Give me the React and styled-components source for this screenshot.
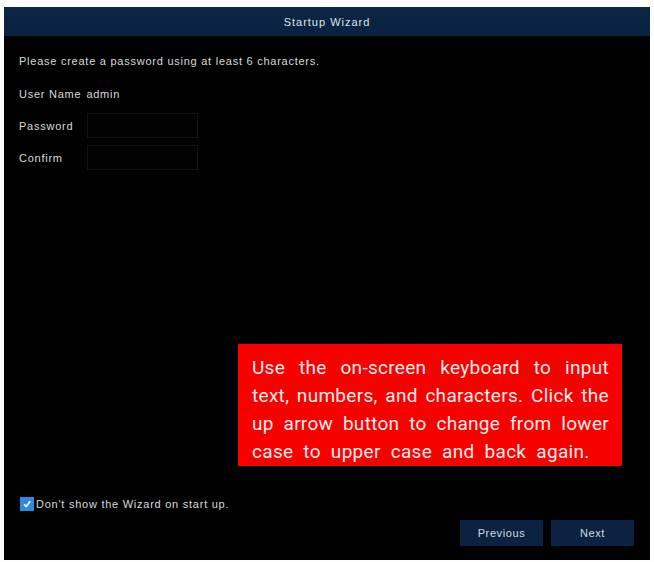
import React, { useState } from "react";
import styled, { createGlobalStyle } from "styled-components";

const GlobalStyle = createGlobalStyle`
  html, body {
    margin: 0;
    padding: 0;
    background: #ffffff;
  }
  body {
    font-family: "Liberation Sans", Arial, sans-serif;
  }
`;

const Page = styled.div`
  width: 654px;
  height: 562px;
  box-sizing: border-box;
  padding: 7px 4px 2px 4px;
  background: #fdfdfd;
`;

const Screen = styled.div`
  position: relative;
  height: 100%;
  background: #010101;
  display: flex;
  flex-direction: column;
  color: #d9d9d9;
  font-size: 11px;
  letter-spacing: 0.75px;
`;

const Header = styled.div`
  height: 29px;
  flex: 0 0 auto;
  background: linear-gradient(#0c2645, #0a2140);
  display: flex;
  align-items: center;
  justify-content: center;
  color: #dfe3ea;
  font-size: 11px;
  letter-spacing: 1px;
`;

const Body = styled.div`
  flex: 1;
  display: flex;
  flex-direction: column;
  padding: 0 16px 14px 15px;
`;

const Intro = styled.div`
  margin-top: 17px;
  line-height: 16px;
`;

const Row = styled.div`
  display: flex;
  align-items: center;
  margin-top: ${(p) => p.$gap}px;
  height: ${(p) => p.$h}px;
`;

const Label = styled.span`
  width: ${(p) => (p.$auto ? "auto" : "68px")};
  margin-right: ${(p) => (p.$auto ? "5px" : "0")};
`;

const Field = styled.div`
  width: 111px;
  height: 25px;
  box-sizing: border-box;
  border: 1px solid #141414;
  background: #020202;
`;

const Footer = styled.div`
  margin-top: auto;
  display: flex;
  flex-direction: column;
`;

const CheckRow = styled.label`
  display: flex;
  align-items: center;
  height: 14px;
  padding-left: 1px;
  cursor: pointer;
`;

const Box = styled.span`
  width: 14px;
  height: 14px;
  background: #2c8be0;
  display: flex;
  align-items: center;
  justify-content: center;
  margin-right: 2px;
`;

const Buttons = styled.div`
  display: flex;
  justify-content: flex-end;
  gap: 8px;
  margin-top: 9px;
`;

const Button = styled.button`
  width: 83px;
  height: 26px;
  border: none;
  background: #0b2240;
  color: #d4d9e0;
  font-family: "Liberation Sans", Arial, sans-serif;
  font-size: 11px;
  letter-spacing: 0.6px;
  cursor: pointer;
`;

const Callout = styled.div`
  position: absolute;
  left: 234px;
  top: 337px;
  width: 384px;
  height: 122px;
  box-sizing: border-box;
  background: #f70000;
  color: #ffecec;
  padding: 10px 13px 0 14px;
  font-family: Roboto, "Liberation Sans", sans-serif;
  font-size: 19px;
  line-height: 28px;
  letter-spacing: 0.3px;
`;

const CalloutLine = styled.span`
  display: block;
  white-space: nowrap;
  text-align: justify;
  word-spacing: ${(p) => (p.$last ? "5px" : "2px")};
  text-align-last: ${(p) => (p.$last ? "left" : "justify")};
`;

const lines = [
  "Use the on-screen keyboard to input",
  "text, numbers, and characters. Click the",
  "up arrow button to change from lower",
  "case to upper case and back again.",
];

export default function App() {
  const [hide, setHide] = useState(true);
  return (
    <Page>
      <GlobalStyle />
      <Screen>
        <Header>Startup Wizard</Header>
        <Body>
          <Intro>Please create a password using at least 6 characters.</Intro>
          <Row $gap={17} $h={16}>
            <Label $auto>User Name</Label>
            <span>admin</span>
          </Row>
          <Row $gap={11} $h={25}>
            <Label>Password</Label>
            <Field />
          </Row>
          <Row $gap={7} $h={25}>
            <Label>Confirm</Label>
            <Field />
          </Row>
          <Footer>
            <CheckRow onClick={() => setHide(!hide)}>
              <Box>
                {hide && (
                  <svg width="10" height="10" viewBox="0 0 10 10">
                    <path d="M2 5.2 L4.2 7.6 L8.3 2.2" fill="none" stroke="#ffffff" strokeWidth="1.6" />
                  </svg>
                )}
              </Box>
              Don't show the Wizard on start up.
            </CheckRow>
            <Buttons>
              <Button>Previous</Button>
              <Button>Next</Button>
            </Buttons>
          </Footer>
        </Body>
        <Callout>
          {lines.map((l, i) => (
            <CalloutLine key={i} $last={i === lines.length - 1}>
              {l}
            </CalloutLine>
          ))}
        </Callout>
      </Screen>
    </Page>
  );
}
